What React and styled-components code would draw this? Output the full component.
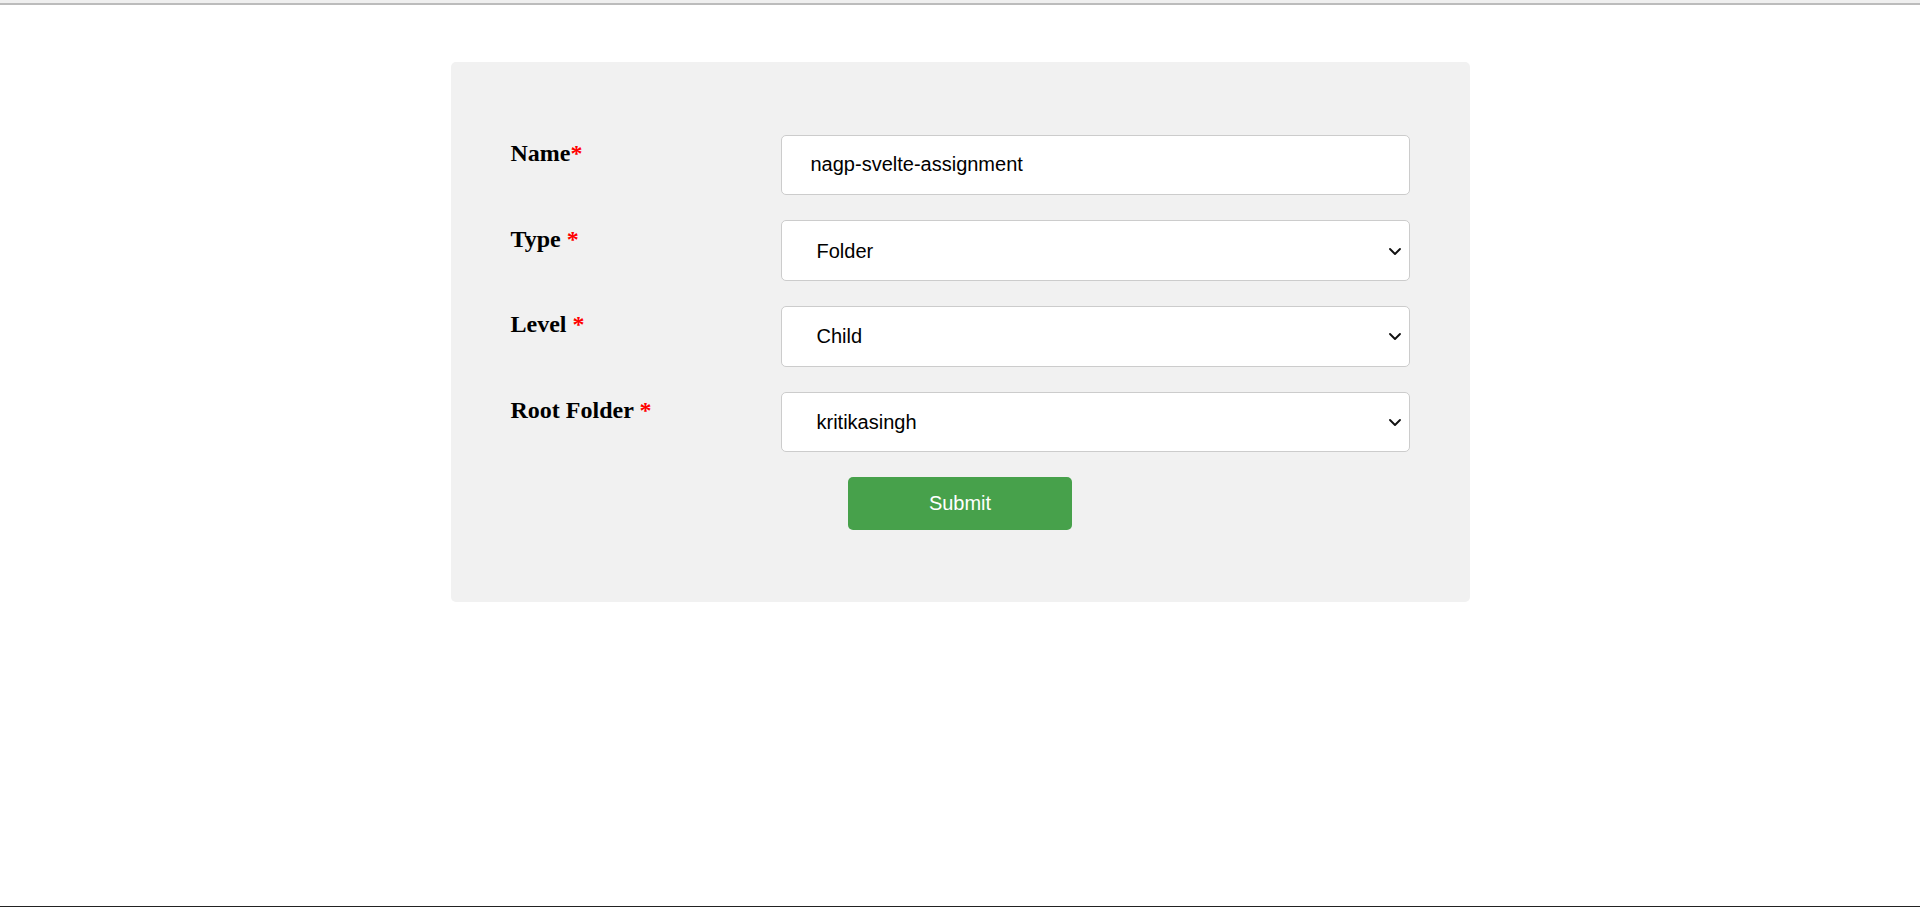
import React, { useState } from "react";
import styled, { createGlobalStyle } from "styled-components";

const GlobalStyle = createGlobalStyle`
  * {
    box-sizing: border-box;
  }
  body {
    margin: 0;
    background: #ffffff;
    font-family: "Liberation Serif", "Times New Roman", serif;
  }
`;

const Page = styled.div`
  display: flex;
  flex-direction: column;
  min-height: 100vh;
`;

const TopEdge = styled.div`
  height: 5px;
  background: #efefef;
  border-bottom: 2px solid #bcbcbc;
`;

const BottomEdge = styled.div`
  margin-top: auto;
  height: 1px;
  background: #222222;
`;

const Card = styled.div`
  width: 1019px;
  margin: 57px auto 0;
  padding: 72.5px 60px 72px;
  background: #f1f1f1;
  border-radius: 5px;
`;

const Form = styled.form`
  display: flex;
  flex-direction: column;
  gap: 25px;
`;

const Row = styled.div`
  display: grid;
  grid-template-columns: 270px 1fr;
  align-items: start;
`;

const Label = styled.label`
  margin-top: 5.5px;
  font-family: "Liberation Serif", "Times New Roman", serif;
  font-size: 24px;
  font-weight: bold;
  color: #000000;
`;

const Required = styled.span`
  color: #ff0000;
`;

const fieldStyles = `
  width: 100%;
  height: 60.7px;
  border: 1px solid #cccccc;
  border-radius: 5px;
  background: #ffffff;
  font-family: "Liberation Sans", Arial, sans-serif;
  font-size: 20px;
  color: #000000;
  outline: none;
`;

const TextInput = styled.input`
  ${fieldStyles}
  padding: 0 29px;
`;

const SelectWrap = styled.div`
  position: relative;
`;

const Select = styled.select`
  ${fieldStyles}
  appearance: none;
  padding: 0 40px 0 35px;
`;

const Chevron = styled.svg`
  position: absolute;
  right: 8px;
  top: 50%;
  width: 14px;
  height: 9px;
  margin-top: -4px;
  pointer-events: none;
`;

const SubmitButton = styled.button`
  align-self: center;
  width: 224px;
  height: 52.4px;
  border: none;
  border-radius: 5px;
  background: #47a14b;
  color: #ffffff;
  font-family: "Liberation Sans", Arial, sans-serif;
  font-size: 20px;
  cursor: pointer;
`;

const SelectField = ({ id, name, value, onChange, options }) => (
  <SelectWrap>
    <Select id={id} name={name} value={value} onChange={onChange}>
      {options.map((o) => (
        <option key={o}>{o}</option>
      ))}
    </Select>
    <Chevron viewBox="0 0 14 9">
      <polyline
        points="2,2 7,7 12,2"
        fill="none"
        stroke="#111111"
        strokeWidth="1.9"
        strokeLinecap="round"
        strokeLinejoin="round"
      />
    </Chevron>
  </SelectWrap>
);

const App = () => {
  const [form, setForm] = useState({
    name: "nagp-svelte-assignment",
    type: "Folder",
    level: "Child",
    root: "kritikasingh",
  });

  const handleChange = (e) => {
    const { name, value } = e.target;
    setForm({ ...form, [name]: value });
  };

  return (
    <Page>
      <GlobalStyle />
      <TopEdge />
      <Card>
        <Form onSubmit={(e) => e.preventDefault()}>
          <Row>
            <Label htmlFor="name">
              Name<Required>*</Required>
            </Label>
            <TextInput
              id="name"
              name="name"
              value={form.name}
              onChange={handleChange}
            />
          </Row>
          <Row>
            <Label htmlFor="type">
              Type <Required>*</Required>
            </Label>
            <SelectField
              id="type"
              name="type"
              value={form.type}
              onChange={handleChange}
              options={["Folder", "File"]}
            />
          </Row>
          <Row>
            <Label htmlFor="level">
              Level <Required>*</Required>
            </Label>
            <SelectField
              id="level"
              name="level"
              value={form.level}
              onChange={handleChange}
              options={["Root", "Child"]}
            />
          </Row>
          <Row>
            <Label htmlFor="root">
              Root Folder <Required>*</Required>
            </Label>
            <SelectField
              id="root"
              name="root"
              value={form.root}
              onChange={handleChange}
              options={["kritikasingh"]}
            />
          </Row>
          <SubmitButton type="submit">Submit</SubmitButton>
        </Form>
      </Card>
      <BottomEdge />
    </Page>
  );
};

export default App;
